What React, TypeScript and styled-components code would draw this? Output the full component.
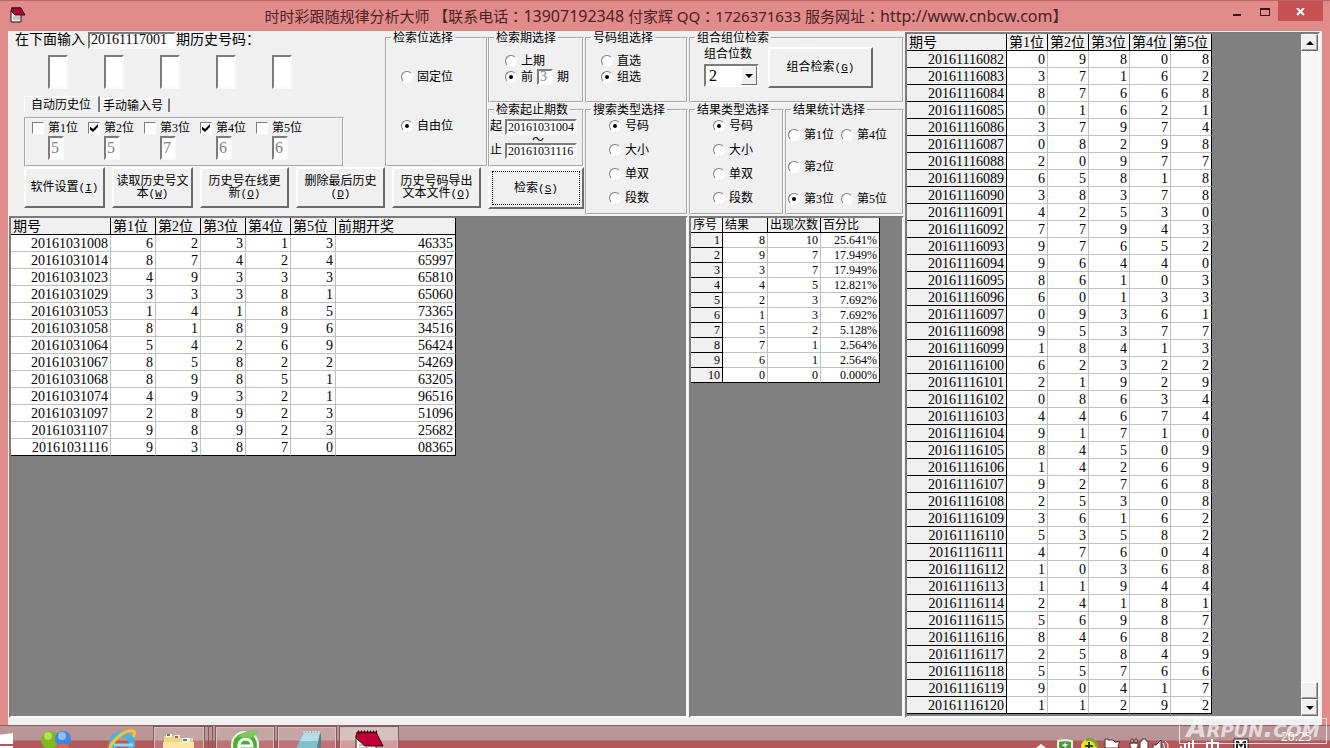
import React from "react";
import styled, { createGlobalStyle, css } from "styled-components";

const face = "#f0f0f0";
const shadow = "#7c7c7c";
const uiFont = `"Liberation Serif", "Noto Sans CJK SC", serif`;

const GlobalStyle = createGlobalStyle`
  *, *::before, *::after { box-sizing: border-box; }
  body { margin: 0; background: #e28b8b; color: #000; font: 12px/14px ${uiFont}; }
  input, button, select { font: inherit; color: inherit; margin: 0; }
`;

const sunken = css`
  border: 2px solid;
  border-color: ${shadow} #fafafa #fafafa ${shadow};
`;

const Desktop = styled.div`
  min-height: 100vh;
  display: flex;
  flex-direction: column;
`;

/* ---------- title bar ---------- */

const TitleBar = styled.header`
  height: 31px;
  flex: none;
  display: grid;
  grid-template-columns: 1fr auto 1fr;
  border-top: 1px solid #b96668;
  padding: 0 7px 0 9px;
`;

const TitleIcon = styled.svg`
  width: 18px;
  height: 18px;
  margin-top: 5px;
`;

const Title = styled.h1`
  margin: 0;
  font: 400 15px/30px "Noto Sans", "Noto Sans CJK SC", sans-serif;
  color: #4b2226;
  white-space: nowrap;
`;

const Latin = styled.span`
  font-size: 16px;
`;

const WideColon = styled.span`
  font-family: "Noto Sans CJK TC", sans-serif;
`;

const WindowButtons = styled.div`
  display: flex;
  justify-content: flex-end;
`;

const WindowButton = styled.button<{ $close?: boolean }>`
  width: ${(p) => (p.$close ? 45 : 27)}px;
  height: 20px;
  border: 0;
  padding: 2px 0 0;
  display: grid;
  place-items: center;
  background: ${(p) => (p.$close ? "#c75052" : "transparent")};
`;

/* ---------- client area ---------- */

const Client = styled.main`
  flex: 1;
  margin: 0 8px;
  background: ${face};
  display: grid;
  grid-template-columns: minmax(896px, 1fr) 418px;
  padding-bottom: 7px;
`;

const Workspace = styled.div`
  display: flex;
  flex-direction: column;
`;

const Controls = styled.div`
  display: flex;
  gap: 1px;
  height: 185px;
`;

const Column = styled.div<{ $w?: number }>`
  display: flex;
  flex-direction: column;
  ${(p) => (p.$w ? `width: ${p.$w}px; flex: none;` : "flex: 1;")}
`;

const Row = styled.div<{ $gap?: number }>`
  display: flex;
  gap: ${(p) => p.$gap ?? 0}px;
`;

const Group = styled.fieldset<{ $h: number; $w?: number }>`
  height: ${(p) => p.$h}px;
  ${(p) => (p.$w ? `width: ${p.$w}px; flex: none;` : "")}
  min-width: 0;
  margin: 0;
  padding: 0;
  border: 2px groove #fbfbfb;
`;

const FlexGroup = styled(Group)`
  flex: 1;
`;

const Legend = styled.legend`
  margin-left: 4px;
  padding: 0 2px;
  line-height: 14px;
  white-space: nowrap;
`;

const Stack = styled.div<{ $top: number; $left: number; $gap: number }>`
  display: flex;
  flex-direction: column;
  align-items: flex-start;
  padding: ${(p) => p.$top}px 0 0 ${(p) => p.$left}px;
  gap: ${(p) => p.$gap}px;
`;

const Choice = styled.label`
  display: flex;
  align-items: center;
  gap: 4px;
  height: 14px;
  line-height: 16px;
  white-space: nowrap;
`;

const RadioInput = styled.input`
  appearance: none;
  width: 12px;
  height: 12px;
  flex: none;
  border-radius: 50%;
  border: 1px solid;
  border-color: ${shadow} #fff #fff ${shadow};
  background: #fff;
  display: grid;
  place-content: center;
  &:checked::after {
    content: "";
    width: 4px;
    height: 4px;
    border-radius: 50%;
    background: #000;
  }
`;

const CheckInput = styled.input`
  appearance: none;
  width: 12px;
  height: 12px;
  flex: none;
  border: 1px solid;
  border-color: ${shadow} #fff #fff ${shadow};
  background: #fff;
  display: grid;
  place-content: center;
  &:checked::after {
    content: "";
    width: 8px;
    height: 8px;
    background: #000;
    clip-path: polygon(0 30%, 38% 62%, 100% 0, 100% 36%, 38% 100%, 0 68%);
  }
`;

const Field = styled.input<{ $w: number; $h: number; $size?: number; $muted?: boolean }>`
  ${sunken}
  width: ${(p) => p.$w}px;
  height: ${(p) => p.$h}px;
  flex: none;
  padding: 0 0 0 1px;
  background: #fff;
  border-radius: 0;
  font-size: ${(p) => p.$size ?? 14}px;
  color: ${(p) => (p.$muted ? "#808080" : "#000")};
  outline: 0;
`;

const Entry = styled.div`
  width: 377px;
  flex: none;
  display: flex;
  flex-direction: column;
`;

const EntryLine = styled.div`
  display: flex;
  align-items: center;
  height: 18px;
  padding-left: 7px;
  font-size: 14px;
  line-height: 16px;
`;

const EntryText = styled.label`
  margin-right: 3px;
  white-space: nowrap;
`;

const DigitRow = styled.div`
  display: flex;
  gap: 36px;
  padding: 6px 0 0 40px;
`;

const Tabs = styled.div`
  display: flex;
  align-items: flex-end;
  margin: 7px 0 0 16px;
`;

const Tab = styled.button<{ $active?: boolean }>`
  height: ${(p) => (p.$active ? 16 : 14)}px;
  padding: 0 ${(p) => (p.$active ? 7 : 5)}px 0 ${(p) => (p.$active ? 6 : 3)}px;
  border: 0;
  border-top: 1px solid #fff;
  border-left: ${(p) => (p.$active ? "1px solid #fff" : "0")};
  border-right: 2px solid ${shadow};
  background: ${face};
  line-height: 14px;
  white-space: nowrap;
`;

const PositionBox = styled.div`
  width: 320px;
  height: 50px;
  margin: 5px 0 0 16px;
  padding: 2px 0 0 6px;
  border: 2px groove #fbfbfb;
  display: flex;
`;

const Position = styled.div`
  width: 56px;
  display: flex;
  flex-direction: column;
  gap: 1px;
  input[type="text"] { margin-left: 16px; }
`;

const ButtonRow = styled.div`
  display: flex;
  gap: 7px;
  padding-left: 16px;
`;

const PushButton = styled.button<{ $w: number; $default?: boolean }>`
  width: ${(p) => p.$w}px;
  height: ${(p) => (p.$default ? 42 : 41)}px;
  flex: none;
  padding: 0;
  background: ${face};
  border: 2px solid;
  border-color: #fff #6a6a6a #6a6a6a #fff;
  line-height: 12px;
  outline: ${(p) => (p.$default ? "1px dotted #000" : "0")};
  outline-offset: -5px;
  white-space: nowrap;
`;

const Mono = styled.span`
  font: 11px/12px "Liberation Mono", monospace;
`;

const PeriodRow = styled.div`
  display: flex;
  align-items: center;
  gap: 4px;
  height: 16px;
`;

const RangeRow = styled.label`
  display: flex;
  gap: 3px;
  height: 16px;
`;

const RangeMark = styled.div`
  height: 8px;
  line-height: 10px;
  padding-left: 42px;
`;

const RangeBody = styled.div`
  padding-top: 2px;
`;

const ComboBody = styled.div`
  display: flex;
  gap: 9px;
  padding: 2px 0 0 13px;
`;

const ComboField = styled.label`
  display: flex;
  flex-direction: column;
  gap: 3px;
  line-height: 14px;
`;

const SelectBox = styled.span`
  position: relative;
  display: block;
  width: 55px;
  height: 23px;
`;

const Select = styled.select`
  ${sunken}
  appearance: none;
  width: 100%;
  height: 100%;
  padding: 0 0 0 3px;
  background: #fff;
  border-radius: 0;
  font-size: 16px;
`;

const SelectArrow = styled.svg`
  position: absolute;
  top: 2px;
  right: 2px;
  width: 16px;
  height: 19px;
  pointer-events: none;
  background: ${face};
  border: 1px solid;
  border-color: #fff #6a6a6a #6a6a6a #fff;
`;

const StatGrid = styled.div`
  display: grid;
  grid-template-columns: 53px 53px;
  row-gap: 18px;
  padding: 11px 0 0 1px;
`;

/* ---------- data grids ---------- */

const Panels = styled.div`
  flex: 1;
  display: grid;
  grid-template-columns: 1fr 215px;
  gap: 1px;
  padding-left: 1px;
`;

const Sheet = styled.section`
  ${sunken}
  background: #808080;
  overflow: hidden;
`;

const HistorySheet = styled(Sheet)`
  display: flex;
  justify-content: space-between;
  margin: 1px 2px 0 1px;
`;

const Grid = styled.table<{ $row: number; $size: number; $w: number }>`
  width: ${(p) => p.$w}px;
  table-layout: fixed;
  border-collapse: separate;
  border-spacing: 0;
  background: #fff;
  font-size: ${(p) => p.$size}px;
  align-self: flex-start;
  th, td {
    height: ${(p) => p.$row}px;
    line-height: ${(p) => p.$row - 2}px;
    padding: 1px 2px 0;
    border: solid #c0c0c0;
    border-width: 0 1px 1px 0;
    font-weight: 400;
    text-align: right;
    white-space: nowrap;
    overflow: hidden;
  }
  th { background: ${face}; border-color: #000; }
  thead th { text-align: left; padding-right: 0; }
  td:last-child { border-right-color: #000; }
  tbody tr:last-child td { border-bottom-color: #000; }
`;

const ScrollBar = styled.div`
  width: 17px;
  display: flex;
  flex-direction: column;
  background: repeating-conic-gradient(#fff 0 25%, #f0f0f0 0 50%) 0 0 / 2px 2px;
`;

const ScrollButton = styled.button`
  width: 17px;
  height: 17px;
  padding: 0;
  display: grid;
  place-items: center;
  background: ${face};
  border: 1px solid;
  border-color: #fff #6a6a6a #6a6a6a #fff;
  box-shadow: inset -1px -1px #a8a8a8;
`;

const ScrollThumb = styled.div`
  height: 17px;
  margin-top: auto;
  background: ${face};
  border: 1px solid;
  border-color: #fff #6a6a6a #6a6a6a #fff;
  box-shadow: inset -1px -1px #a8a8a8;
`;

/* ---------- task bar ---------- */

const TaskBar = styled.footer`
  position: relative;
  height: 23px;
  flex: none;
  display: flex;
  justify-content: space-between;
  border-top: 1px solid #925c5f;
  background: linear-gradient(#b99697 0 14px, #b4595b 15px);
`;

const TaskList = styled.div`
  display: flex;
  gap: 2px;
  height: 22px;
  overflow: hidden;
`;

const TaskButton = styled.button<{ $w: number; $frame?: "open" | "active" }>`
  width: ${(p) => p.$w}px;
  height: 40px;
  flex: none;
  padding: 0;
  border: 1px solid ${(p) => (p.$frame ? "#85595b" : "transparent")};
  box-shadow: ${(p) => (p.$frame ? "inset 1px 1px #d9bfc0, inset -1px 0 #d9bfc0" : "none")};
  background: ${(p) =>
    p.$frame === "active" ? "rgba(255,255,255,.4)" : p.$frame ? "rgba(255,255,255,.16)" : "transparent"};
  display: flex;
  align-items: flex-start;
  justify-content: center;
  svg { display: block; flex: none; }
`;

const StackEdge = styled.span`
  width: 4px;
  margin-left: -2px;
  border: solid #85595b;
  border-width: 1px 1px 0 0;
`;

const Tray = styled.div`
  display: flex;
  height: 22px;
  overflow: hidden;
  padding-right: 13px;
`;

const TraySvg = styled.svg`
  width: 220px;
  height: 22px;
`;

const Clock = styled.time`
  width: 67px;
  padding: 4px 0 0 31px;
  color: #fff;
  font: 12px/14px "Open Sans", sans-serif;
`;

const Watermark = styled.div`
  position: absolute;
  right: 3px;
  top: -8px;
  width: 148px;
  height: 26px;
  border: 1px solid rgba(255, 255, 255, 0.75);
  color: rgba(255, 255, 255, 0.68);
  font: italic 700 26px/18px "DejaVu Sans", sans-serif;
  font-variant-caps: small-caps;
  text-align: center;
  white-space: nowrap;
`;

/* ---------- data ---------- */

const positions = ["第1位", "第2位", "第3位", "第4位", "第5位"];

const hits = [
  ["20161031008", "62313", "46335"],
  ["20161031014", "87424", "65997"],
  ["20161031023", "49333", "65810"],
  ["20161031029", "33381", "65060"],
  ["20161031053", "14185", "73365"],
  ["20161031058", "81896", "34516"],
  ["20161031064", "54269", "56424"],
  ["20161031067", "85822", "54269"],
  ["20161031068", "89851", "63205"],
  ["20161031074", "49321", "96516"],
  ["20161031097", "28923", "51096"],
  ["20161031107", "98923", "25682"],
  ["20161031116", "93870", "08365"],
];

const results = [
  ["8", "10", "25.641%"],
  ["9", "7", "17.949%"],
  ["3", "7", "17.949%"],
  ["4", "5", "12.821%"],
  ["2", "3", "7.692%"],
  ["1", "3", "7.692%"],
  ["5", "2", "5.128%"],
  ["7", "1", "2.564%"],
  ["6", "1", "2.564%"],
  ["0", "0", "0.000%"],
];

const firstDraw = 20161116082;
const draws = [
  "09808", "37162", "87668", "01621", "37974", "08298", "20977", "65818", "38378", "42530",
  "77943", "97652", "96440", "86103", "60133", "09361", "95377", "18413", "62322", "21929",
  "08634", "44674", "91710", "84509", "14269", "92768", "25308", "36162", "53582", "47604",
  "10368", "11944", "24181", "56987", "84682", "25849", "55766", "90417", "11292",
];

/* ---------- small parts ---------- */

function Radio({ name, label, checked }: { name: string; label: string; checked?: boolean }) {
  return (
    <Choice>
      <RadioInput type="radio" name={name} defaultChecked={checked} />
      {label}
    </Choice>
  );
}

function Key({ k }: { k: string }) {
  return (
    <Mono>
      (<u>{k}</u>)
    </Mono>
  );
}

function NotebookIcon() {
  return (
    <TitleIcon viewBox="0 0 18 18">
      <path d="M2 5h10v11H2z" fill="#f4ece8" stroke="#2a1014" />
      <path d="M4 11h7M4 13h7" stroke="#a9a09c" strokeWidth="1" />
      <path d="M3 2h9l4 7H6L2 5z" fill="#b8003a" stroke="#3a0614" />
      <path d="M3 1v2M5 1v2M7 1v2M9 1v2M11 1v2" stroke="#2a0a10" />
    </TitleIcon>
  );
}

const typeOptions = ["号码", "大小", "单双", "段数"];

export default function App() {
  return (
    <Desktop>
      <GlobalStyle />
      <TitleBar>
        <NotebookIcon />
        <Title>
          时时彩跟随规律分析大师 【联系电话<WideColon>：</WideColon>
          <Latin>13907192348</Latin> 付家辉 QQ<WideColon>：</WideColon>
          1726371633 服务网址<WideColon>：</WideColon>
          <Latin>http://www.cnbcw.com</Latin>】
        </Title>
        <WindowButtons>
          <WindowButton aria-label="最小化">
            <svg width="9" height="9">
              <path d="M0 6h8v2H0z" fill="#35171a" />
            </svg>
          </WindowButton>
          <WindowButton aria-label="最大化">
            <svg width="10" height="9">
              <path d="M0 0h10v8H0zM1 2v5h8V2z" fill="#35171a" fillRule="evenodd" />
            </svg>
          </WindowButton>
          <WindowButton $close aria-label="关闭">
            <svg width="9" height="8">
              <path d="M1 0l7 7M8 0L1 7" stroke="#fff" strokeWidth="2" />
            </svg>
          </WindowButton>
        </WindowButtons>
      </TitleBar>

      <Client>
        <Workspace>
          <Controls>
            <Column $w={576}>
              <Row>
                <Entry>
                  <EntryLine>
                    <EntryText htmlFor="period">在下面输入</EntryText>
                    <Field id="period" $w={88} $h={17} defaultValue="20161117001" />
                    <span>期历史号码：</span>
                  </EntryLine>
                  <DigitRow>
                    {positions.map((p) => (
                      <Field key={p} aria-label={p} $w={20} $h={34} />
                    ))}
                  </DigitRow>
                  <Tabs>
                    <Tab $active>自动历史位</Tab>
                    <Tab>手动输入号</Tab>
                  </Tabs>
                  <PositionBox>
                    {positions.map((p, i) => (
                      <Position key={p}>
                        <Choice>
                          <CheckInput type="checkbox" defaultChecked={i === 1 || i === 3} />
                          {p}
                        </Choice>
                        <Field
                          type="text"
                          aria-label={`${p}号码`}
                          $w={16}
                          $h={24}
                          $size={16}
                          $muted
                          readOnly
                          value={"55766"[i]}
                        />
                      </Position>
                    ))}
                  </PositionBox>
                </Entry>
                <Group $h={136} $w={103}>
                  <Legend>检索位选择</Legend>
                  <Stack $top={25} $left={14} $gap={35}>
                    <Radio name="slot" label="固定位" />
                    <Radio name="slot" label="自由位" checked />
                  </Stack>
                </Group>
                <Column $w={96}>
                  <Group $h={72}>
                    <Legend>检索期选择</Legend>
                    <Stack $top={9} $left={15} $gap={1}>
                      <Radio name="term" label="上期" />
                      <PeriodRow>
                        <Radio name="term" label="前" checked />
                        <Field aria-label="期数" $w={16} $h={16} $muted readOnly value="3" />
                        <span>期</span>
                      </PeriodRow>
                    </Stack>
                  </Group>
                  <Group $h={64}>
                    <Legend>检索起止期数</Legend>
                    <RangeBody>
                      <RangeRow>
                        起
                        <Field $w={72} $h={16} $size={12} defaultValue="20161031004" />
                      </RangeRow>
                      <RangeMark>～</RangeMark>
                      <RangeRow>
                        止
                        <Field $w={72} $h={16} $size={12} defaultValue="20161031116" />
                      </RangeRow>
                    </RangeBody>
                  </Group>
                </Column>
              </Row>
              <ButtonRow>
                <PushButton $w={81}>
                  软件设置
                  <Key k="I" />
                </PushButton>
                <PushButton $w={81}>
                  读取历史号文
                  <br />本<Key k="W" />
                </PushButton>
                <PushButton $w={89}>
                  历史号在线更
                  <br />新<Key k="O" />
                </PushButton>
                <PushButton $w={89}>
                  删除最后历史
                  <br />
                  <Key k="D" />
                </PushButton>
                <PushButton $w={89}>
                  历史号码导出
                  <br />
                  文本文件
                  <Key k="O" />
                </PushButton>
                <PushButton $w={96} $default>
                  检索
                  <Key k="S" />
                </PushButton>
              </ButtonRow>
            </Column>

            <Column $w={103}>
              <Group $h={72}>
                <Legend>号码组选择</Legend>
                <Stack $top={9} $left={14} $gap={2}>
                  <Radio name="pick" label="直选" />
                  <Radio name="pick" label="组选" checked />
                </Stack>
              </Group>
              <Group $h={112}>
                <Legend>搜索类型选择</Legend>
                <Stack $top={2} $left={22} $gap={10}>
                  {typeOptions.map((o, i) => (
                    <Radio key={o} name="search" label={o} checked={i === 0} />
                  ))}
                </Stack>
              </Group>
            </Column>

            <Column>
              <Group $h={72}>
                <Legend>组合组位检索</Legend>
                <ComboBody>
                  <ComboField>
                    组合位数
                    <SelectBox>
                      <Select defaultValue="2">
                        <option>2</option>
                        <option>3</option>
                        <option>4</option>
                      </Select>
                      <SelectArrow viewBox="0 0 14 17">
                        <path d="M3 7h8l-4 4z" />
                      </SelectArrow>
                    </SelectBox>
                  </ComboField>
                  <PushButton $w={105}>
                    组合检索
                    <Key k="G" />
                  </PushButton>
                </ComboBody>
              </Group>
              <Row $gap={1}>
                <Group $h={112} $w={95}>
                  <Legend>结果类型选择</Legend>
                  <Stack $top={2} $left={22} $gap={10}>
                    {typeOptions.map((o, i) => (
                      <Radio key={o} name="result" label={o} checked={i === 0} />
                    ))}
                  </Stack>
                </Group>
                <FlexGroup $h={112}>
                  <Legend>结果统计选择</Legend>
                  <StatGrid>
                    <Radio name="stat" label="第1位" />
                    <Radio name="stat" label="第4位" />
                    <Radio name="stat" label="第2位" />
                    <span />
                    <Radio name="stat" label="第3位" checked />
                    <Radio name="stat" label="第5位" />
                  </StatGrid>
                </FlexGroup>
              </Row>
            </Column>
          </Controls>

          <Panels>
            <Sheet>
              <Grid $row={17} $size={14} $w={445}>
                <colgroup>
                  <col width={100} />
                  {positions.map((p) => (
                    <col key={p} width={45} />
                  ))}
                  <col width={120} />
                </colgroup>
                <thead>
                  <tr>
                    <th>期号</th>
                    {positions.map((p) => (
                      <th key={p}>{p}</th>
                    ))}
                    <th>前期开奖</th>
                  </tr>
                </thead>
                <tbody>
                  {hits.map(([id, digits, prev]) => (
                    <tr key={id}>
                      <td>{id}</td>
                      {digits.split("").map((d, i) => (
                        <td key={i}>{d}</td>
                      ))}
                      <td>{prev}</td>
                    </tr>
                  ))}
                </tbody>
              </Grid>
            </Sheet>
            <Sheet>
              <Grid $row={15} $size={12} $w={189}>
                <colgroup>
                  <col width={32} />
                  <col width={45} />
                  <col width={53} />
                  <col width={59} />
                </colgroup>
                <thead>
                  <tr>
                    <th>序号</th>
                    <th>结果</th>
                    <th>出现次数</th>
                    <th>百分比</th>
                  </tr>
                </thead>
                <tbody>
                  {results.map((r, i) => (
                    <tr key={i}>
                      <th scope="row">{i + 1}</th>
                      {r.map((c, j) => (
                        <td key={j}>{c}</td>
                      ))}
                    </tr>
                  ))}
                </tbody>
              </Grid>
            </Sheet>
          </Panels>
        </Workspace>

        <HistorySheet>
          <Grid $row={17} $size={14} $w={305}>
            <colgroup>
              <col width={100} />
              {positions.map((p) => (
                <col key={p} width={41} />
              ))}
            </colgroup>
            <thead>
              <tr>
                <th>期号</th>
                {positions.map((p) => (
                  <th key={p}>{p}</th>
                ))}
              </tr>
            </thead>
            <tbody>
              {draws.map((digits, n) => (
                <tr key={n}>
                  <th scope="row">{firstDraw + n}</th>
                  {digits.split("").map((d, i) => (
                    <td key={i}>{d}</td>
                  ))}
                </tr>
              ))}
            </tbody>
          </Grid>
          <ScrollBar>
            <ScrollButton aria-label="向上滚动">
              <svg width="8" height="4">
                <path d="M0 4L4 0l4 4z" />
              </svg>
            </ScrollButton>
            <ScrollThumb />
            <ScrollButton aria-label="向下滚动">
              <svg width="8" height="4">
                <path d="M0 0h8L4 4z" />
              </svg>
            </ScrollButton>
          </ScrollBar>
        </HistorySheet>
      </Client>

      <TaskBar>
        <TaskList>
          <TaskButton $w={22} aria-label="开始">
            <svg width="22" height="24">
              <path d="M-2 8L13 6v11H-2zM-2 19h15v8H-2z" fill="#fff" />
            </svg>
          </TaskButton>
          <TaskButton $w={64} aria-label="浏览器">
            <svg width="32" height="26">
              <circle cx="10" cy="13" r="9" fill="#7fb81c" />
              <circle cx="8" cy="9" r="4" fill="#b4de54" />
              <circle cx="23" cy="12" r="8" fill="#3f86e0" />
              <circle cx="22" cy="9" r="4" fill="#8fc0f6" />
              <circle cx="23" cy="25" r="8" fill="#e6674c" />
            </svg>
          </TaskButton>
          <TaskButton $w={61} aria-label="Internet Explorer">
            <svg width="32" height="26">
              <circle cx="17" cy="17" r="10" fill="none" stroke="#45b2e6" strokeWidth="6" />
              <path d="M9 18h19" stroke="#8ad8f6" strokeWidth="3" />
              <path d="M3 26C5 14 20 2 28 4c3 1 1 4 0 6" fill="none" stroke="#f3c42c" strokeWidth="3" />
            </svg>
          </TaskButton>
          <TaskButton $w={52} $frame="open" aria-label="文件夹">
            <svg width="34" height="26">
              <path d="M2 9h9l2 2h18v15H2z" fill="#efd585" />
              <path d="M4 7h6v3H4zM12 8h6v3h-6zM20 11h8v4h-8z" fill="#fbf7e4" />
              <path d="M5 7h3v2H5z" fill="#4b9e3a" />
              <path d="M13 9h3v2h-3z" fill="#c0553a" />
              <path d="M21 12h4v2h-4z" fill="#3c82c4" />
              <path d="M1 15h31v11H1z" fill="#f8e6a4" />
            </svg>
          </TaskButton>
          <StackEdge />
          <StackEdge />
          <TaskButton $w={60} $frame="open" aria-label="安全浏览器">
            <svg width="30" height="26">
              <circle cx="15" cy="18" r="14" fill="#e8f6e0" />
              <circle cx="15" cy="18" r="12" fill="#4cb034" />
              <path d="M9 19h13c0-9-12-9-13-1-1 8 8 10 12 6" fill="none" stroke="#fff" strokeWidth="3" />
              <path d="M8 10C15 3 24 2 28 4c-2 4-5 6-8 7" fill="#7cc95a" />
            </svg>
          </TaskButton>
          <TaskButton $w={60} $frame="open" aria-label="记事本">
            <svg width="30" height="26">
              <path d="M11 6h17l-4 20H2z" fill="#84bfd0" />
              <path d="M12 6h16l-2 8H8z" fill="#b5dde6" />
              <path d="M24 26l4-20 1 1v19z" fill="#567f90" />
              <path d="M11 5h17" stroke="#c9d4d8" strokeWidth="2" strokeDasharray="2 1" />
            </svg>
          </TaskButton>
          <TaskButton $w={60} $frame="active" aria-label="分析大师">
            <svg width="32" height="26">
              <path d="M3 8h20v18H3z" fill="#f3efee" stroke="#222" />
              <path d="M6 18h6M6 21h8M6 24h9" stroke="#888" />
              <path d="M4 5h19l7 14H12L3 11z" fill="#c00035" stroke="#33060f" />
              <path d="M5 5h19" stroke="#1d0509" strokeWidth="3" strokeDasharray="1 2" />
            </svg>
          </TaskButton>
        </TaskList>
        <Tray>
          <TraySvg viewBox="0 0 220 22">
            <path d="M6 22l5-4 5 4z" fill="#fff" />
            <path d="M28 15l7-1 7 1v8H28z" fill="#4f9b3c" stroke="#e4efd6" strokeWidth="2" />
            <path d="M36 16l-4 4h3l-1 3 4-5h-3z" fill="#fff" />
            <circle cx="59" cy="21" r="8" fill="#f4dc1c" />
            <path d="M56 14a8 8 0 0 1 11 7" fill="none" stroke="#6fae2c" strokeWidth="3" />
            <path d="M59 16v6M55 20h8" stroke="#1d4b12" strokeWidth="2" />
            <g stroke="#5a2a2c" strokeWidth="1" fill="#fff">
              <path d="M75 13h3v1h5l2 2h5l-2 3 1 3H75z" />
              <path d="M110 15h2v-2h4v2h2v8h-8z" />
              <path d="M100 17h8v3l-2 3h-4l-2-3zM101 13h2v4h-2zM105 13h2v4h-2z" />
              <path d="M123 19h3l5-5v9h-8z" />
            </g>
            <path d="M133 17q2 3 1 5M135 15q4 3 3 7" fill="none" stroke="#fff" strokeWidth="1" />
            <path d="M150 20h2v2h-2zM154 18h2v4h-2zM158 16h2v6h-2zM162 14h2v8h-2z" fill="#fff" />
            <path d="M182 13v9M177 22v-5h11v5" fill="none" stroke="#fff" strokeWidth="2" />
            <path d="M204 13h14v10h-14z" fill="#fff" stroke="#222" />
            <path d="M207 22v-6h1l3 4 3-4h1v6" fill="none" stroke="#222" strokeWidth="2" />
          </TraySvg>
          <Clock>20:25</Clock>
        </Tray>
        <Watermark>Arpun.com</Watermark>
      </TaskBar>
    </Desktop>
  );
}
